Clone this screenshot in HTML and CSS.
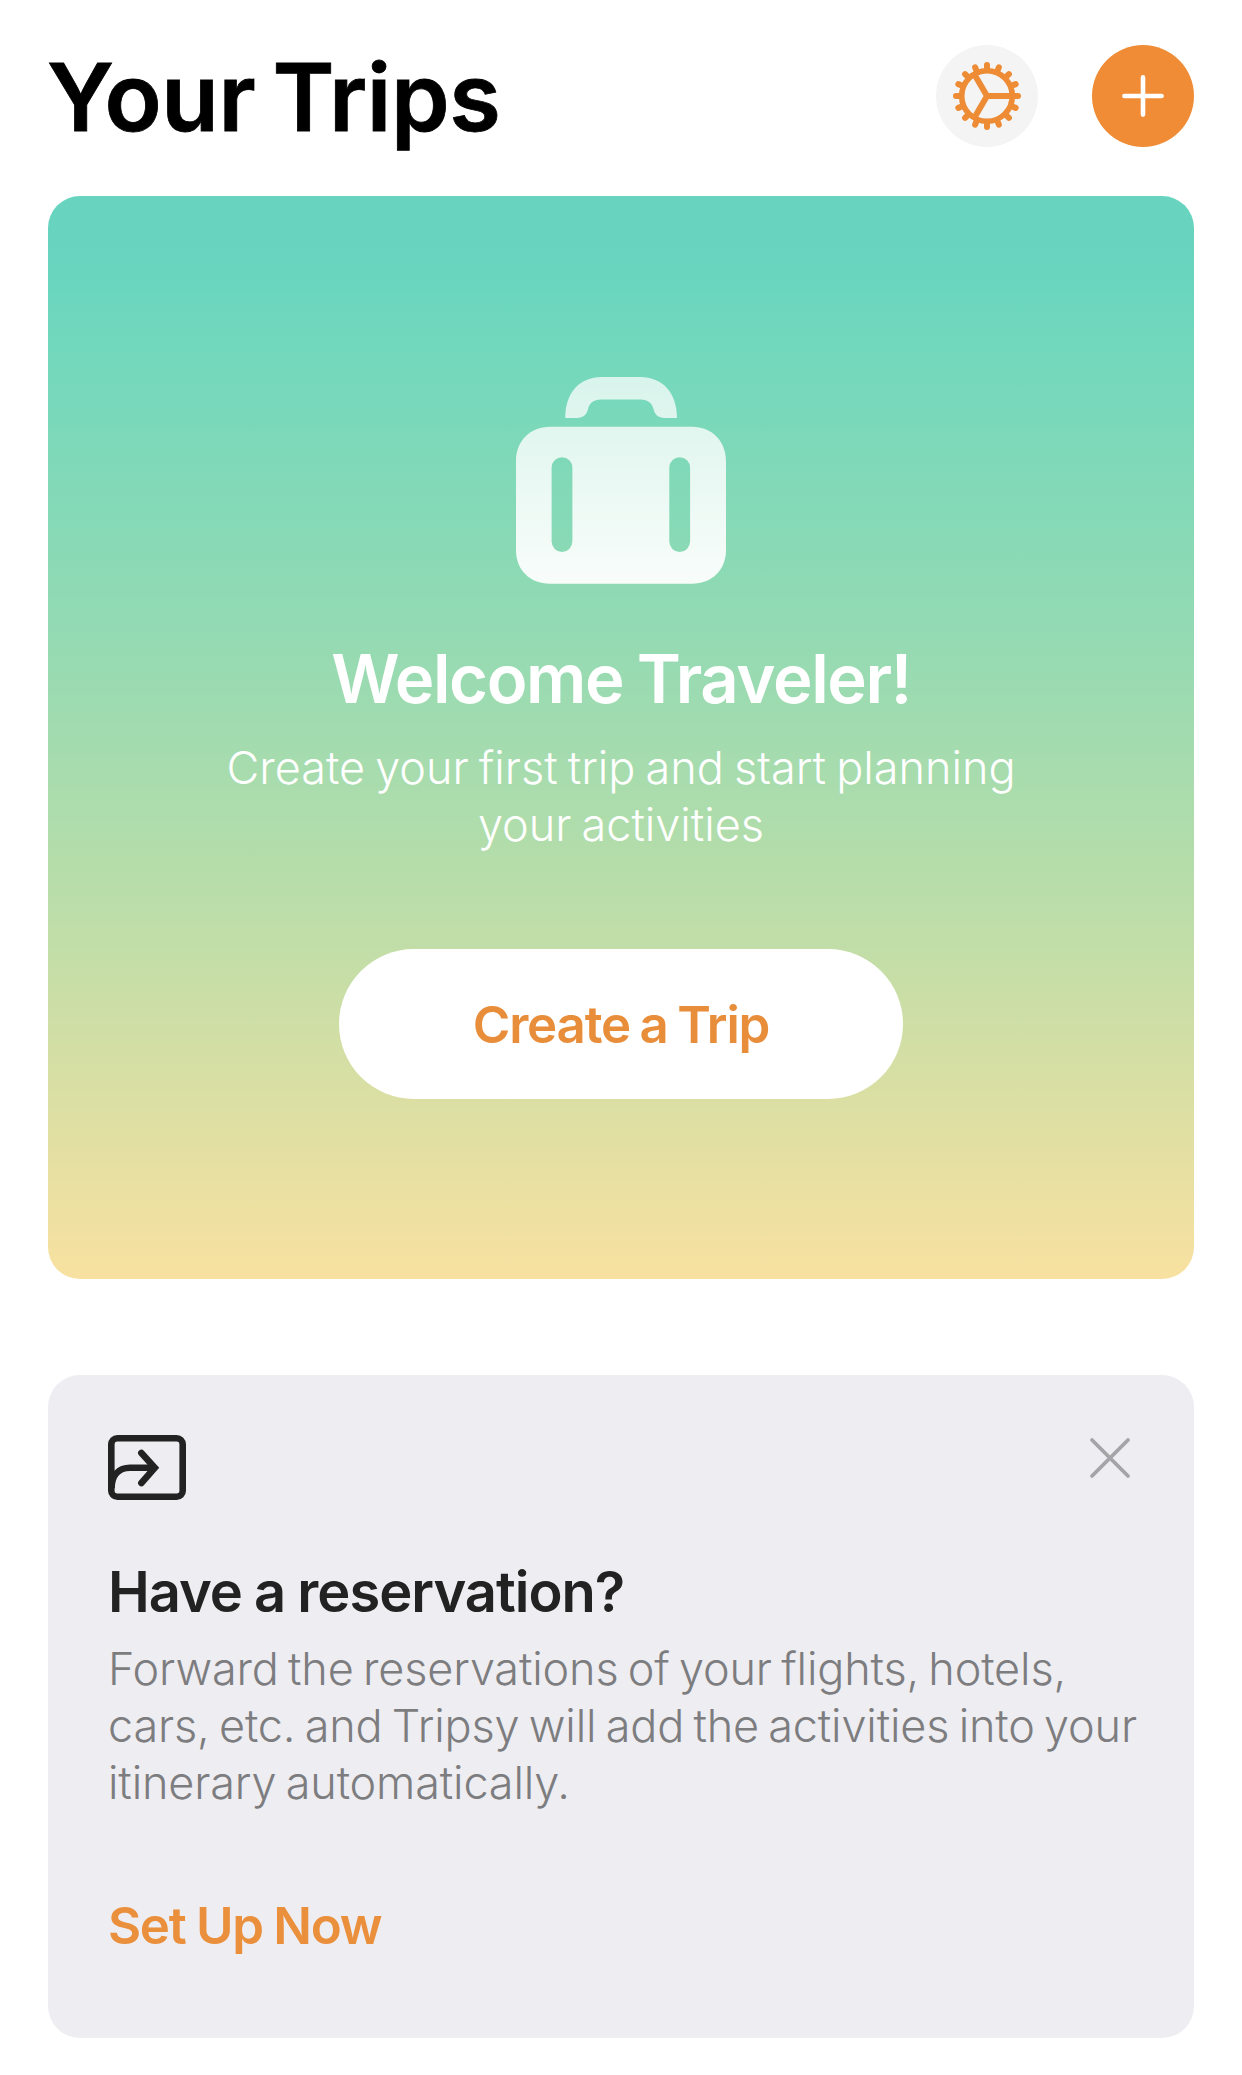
FILE: index.html
```html
<!DOCTYPE html>
<html lang="en">

<head>
    <meta charset="UTF-8">
    <meta name="viewport" content="width=device-width, initial-scale=1.0">
    <title>Your Trips</title>
    <link rel="stylesheet" href="styles.css">
</head>

<body>
    <header class="header">
        <h1>Your Trips</h1>
        <div class="actions">
            <button class="round-btn settings" aria-label="Settings">
                <svg width="70" height="70" viewBox="-35 -35 70 70">
                    <defs>
                        <g id="teeth">
                            <path d="M-31 0H-26M31 0H26M0 -31V-26M0 31V26" />
                        </g>
                    </defs>
                    <g fill="none" stroke="#ee8c35" stroke-width="6" stroke-linecap="round">
                        <use href="#teeth" />
                        <use href="#teeth" transform="rotate(22.5)" />
                        <use href="#teeth" transform="rotate(45)" />
                        <use href="#teeth" transform="rotate(67.5)" />
                        <circle r="25.3" stroke-width="5.6" />
                        <path d="M25 0H0L-12.5 -21.6M0 0L-12.5 21.6" stroke-linecap="butt" />
                    </g>
                </svg>
            </button>
            <button class="round-btn add" aria-label="Add trip">
                <svg width="44" height="44" viewBox="0 0 44 44">
                    <path d="M22 3.4V40.6M3.4 22H40.6" stroke="#fff" stroke-width="4.6" stroke-linecap="round" />
                </svg>
            </button>
        </div>
    </header>

    <section class="welcome">
        <svg class="suitcase" width="210" height="207" viewBox="0 0 210 207">
            <defs>
                <linearGradient id="fade" gradientUnits="userSpaceOnUse" x1="0" y1="0" x2="0" y2="207">
                    <stop offset="0" stop-color="#fff" stop-opacity="0.72" />
                    <stop offset="1" stop-color="#fff" stop-opacity="0.94" />
                </linearGradient>
            </defs>
            <path fill="url(#fade)" d="M49.3 41C49.3 16 63 0 86 0H124C147 0 161 16 161 41H149C142 41 138.500 37 137.500 32C136 26 131.500 22.500 125 22.500H84.500C78 22.500 73.500 26 72 32C71 37 67.500 41 60.500 41Z" />
            <path fill="url(#fade)" fill-rule="evenodd" d="M34 49.700H176C196 49.700 210 64 210 84V173C210 193 196 206.700 176 206.700H34C14 206.700 0 193 0 173V84C0 64 14 49.700 34 49.700ZM46 80.300A10.400 10.400 0 0 0 35.600 90.700V164.600A10.400 10.400 0 0 0 56.400 164.600V90.700A10.400 10.400 0 0 0 46 80.300ZM163.700 80.300A10.400 10.400 0 0 0 153.300 90.700V164.600A10.400 10.400 0 0 0 174.100 164.600V90.700A10.400 10.400 0 0 0 163.700 80.300Z" />
        </svg>
        <h2>Welcome Traveler!</h2>
        <p>Create your first trip and start planning<br>your activities</p>
        <button class="create-btn">Create a Trip</button>
    </section>

    <section class="reservation">
        <div class="reservation-top">
            <svg width="78" height="65" viewBox="0 0 78 65" fill="none" stroke="#222" stroke-width="6.6">
                <rect x="3.3" y="3.3" width="71.4" height="58.4" rx="6" />
                <path d="M3.500 53C4 40 11 32.800 22 32.800H46" />
                <path d="M33.400 18L46.800 32.800L33.400 48" stroke-linecap="round" />
            </svg>
            <button class="close-btn" aria-label="Close">
                <svg width="42" height="42" viewBox="0 0 42 42">
                    <path d="M3 3L39 39M39 3L3 39" stroke="#a5a5a7" stroke-width="3.8" stroke-linecap="round" />
                </svg>
            </button>
        </div>
        <h3>Have a reservation?</h3>
        <p>Forward the reservations of your flights, hotels,<br>cars, etc. and Tripsy will add the activities into your<br>itinerary automatically.</p>
        <a class="setup-link">Set Up Now</a>
    </section>
</body>

</html>
```

FILE: styles.css
```css
body {
    font-family: 'Inter', 'Liberation Sans', sans-serif;
    background: #fff;
    margin: 0;
    padding: 45px 48px 37px;
}

h1,
h2,
h3,
p {
    margin: 0;
    white-space: nowrap;
}

button {
    font-family: inherit;
    border: none;
    padding: 0;
    cursor: pointer;
}

svg {
    display: block;
}

.header {
    display: flex;
    justify-content: space-between;
    align-items: center;
    height: 102px;
    margin-bottom: 49px;
}

h1 {
    color: #000;
    font-size: 94px;
    font-weight: 600;
    line-height: 102px;
    letter-spacing: -0.4px;
    word-spacing: -6px;
    padding-top: 2px;
    margin-left: -1px;
    -webkit-text-stroke: 0.8px #000;
}

.actions {
    display: flex;
    gap: 54px;
}

.round-btn {
    display: flex;
    justify-content: center;
    align-items: center;
    width: 102px;
    height: 102px;
    border-radius: 50%;
}

.settings {
    background: #f4f4f4;
}

.add {
    background: #ef8c35;
}

.welcome {
    display: flex;
    flex-direction: column;
    align-items: center;
    box-sizing: border-box;
    height: 1083px;
    padding-top: 181px;
    border-radius: 32px;
    background: linear-gradient(#68d4bf 0%, #69d5bf 7%, #73d8bc 15%, #93dab3 40%, #b5ddaa 62%, #dcdfa3 84%, #f8e1a0 100%);
    color: #fff;
    text-align: center;
}

.welcome h2 {
    margin-top: 55px;
    font-size: 67px;
    font-weight: 600;
    line-height: 80px;
    letter-spacing: -1.4px;
    word-spacing: -2px;
}

.welcome p {
    margin-top: 20px;
    font-size: 45px;
    font-weight: 300;
    line-height: 57px;
    word-spacing: -2.5px;
}

.create-btn {
    width: 564px;
    height: 150px;
    margin-top: 96px;
    border-radius: 75px;
    background: #fff;
    color: #e88d3a;
    font-size: 51px;
    font-weight: 600;
    letter-spacing: -1.2px;
    word-spacing: -2px;
}

.reservation {
    box-sizing: border-box;
    height: 663px;
    margin-top: 96px;
    padding: 60px;
    border-radius: 32px;
    background: #eeedf2;
    color: #222;
}

.reservation-top {
    display: flex;
    justify-content: space-between;
    align-items: flex-start;
}

.close-btn {
    margin: 2px 3px 0 0;
    background: none;
}

.reservation h3 {
    margin-top: 58px;
    font-size: 56px;
    font-weight: 600;
    line-height: 68px;
    letter-spacing: -1px;
    word-spacing: -1px;
}

.reservation p {
    margin-top: 14px;
    color: #7d7d80;
    font-size: 45px;
    font-weight: 300;
    line-height: 57px;
    letter-spacing: -0.15px;
    word-spacing: -3.2px;
}

.setup-link {
    display: block;
    margin-top: 84px;
    color: #ea8f3c;
    font-size: 51px;
    font-weight: 600;
    line-height: 62px;
    letter-spacing: -1.3px;
    word-spacing: -1px;
}
```
